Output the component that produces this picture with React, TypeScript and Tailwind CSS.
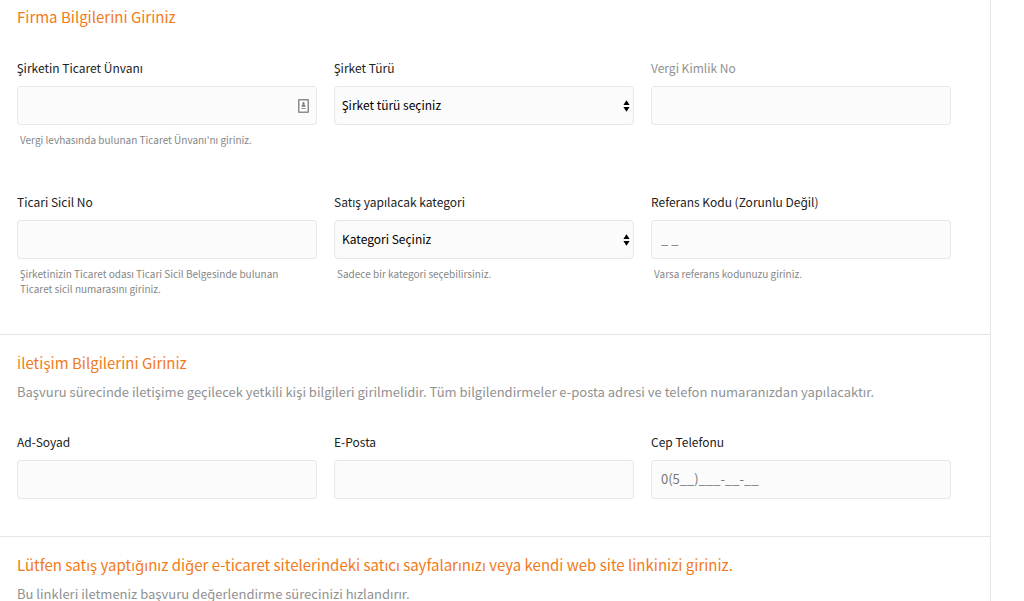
import type { ReactNode } from "react";

const inputClass =
  "block h-[39px] w-full rounded-[3px] border border-[#e8e8e8] bg-[#fbfbfb] px-[9px] pb-0.5 text-[13px] text-[#777] placeholder:text-[#777] outline-none";

function Section({ title, description, className, children }: {
  title: ReactNode;
  description?: string;
  className: string;
  children?: ReactNode;
}) {
  return (
    <section className={`pr-[39px] pb-[37px] pl-[17px] ${className}`}>
      <h2 className="pb-0.5 text-[15px] leading-[22px] text-[#f27a1a]">{title}</h2>
      {description && <p className="mt-1 text-[13px] leading-6 text-[#919191]">{description}</p>}
      {children}
    </section>
  );
}

function Field({ id, label, help, muted, children }: {
  id: string;
  label: string;
  help?: string;
  muted?: boolean;
  children: ReactNode;
}) {
  return (
    <div>
      <label
        htmlFor={id}
        className={`mb-2 block text-xs leading-5 ${muted ? "text-[#919191]" : "text-[#222]"}`}
      >
        {label}
      </label>
      {children}
      {help && <p className="mt-[7px] pr-8 pb-px pl-[3px] text-[10px] leading-[15px] text-[#868686]">{help}</p>}
    </div>
  );
}

function Select({ id, placeholder }: { id: string; placeholder: string }) {
  return (
    <div className="relative">
      <select
        id={id}
        className="block h-[39px] w-full appearance-none rounded-[4px] border border-[#e6e6e6] bg-[#fbfbfb] px-[7px] pb-0.5 text-xs text-black outline-none"
      >
        <option>{placeholder}</option>
      </select>
      <svg
        className="pointer-events-none absolute inset-y-0 right-1 my-auto"
        width="7"
        height="12"
        viewBox="0 0 7 12"
        aria-hidden="true"
      >
        <path d="M3.5 0.3 6.6 5H0.4zM3.5 11.7 0.4 7h6.2z" fill="#000" />
      </svg>
    </div>
  );
}

export default function App() {
  return (
    <div className="min-h-screen bg-white font-['Noto_Sans_CJK_SC','Noto_Sans',sans-serif]">
      <form className="mr-[33px] min-h-screen border-r border-[#e6e6e6]">
        <Section title="Firma Bilgilerini Giriniz" className="pt-1.5">
          <div className="mt-7 grid grid-cols-3 gap-x-[17px] gap-y-11">
            <Field
              id="unvan"
              label="Şirketin Ticaret Ünvanı"
              help="Vergi levhasında bulunan Ticaret Ünvanı'nı giriniz."
            >
              <div className="relative">
                <input id="unvan" type="text" className={inputClass} />
                {/* Contact autofill icon */}
                <svg
                  className="pointer-events-none absolute inset-y-0 right-2 my-auto"
                  width="11"
                  height="14"
                  viewBox="0 0 11 14"
                  aria-hidden="true"
                >
                  <rect x="0.75" y="0.75" width="9.5" height="12.5" rx="0.5" fill="#fff" stroke="#8c8c8c" strokeWidth="1.5" />
                  <circle cx="5.5" cy="4.2" r="1.1" fill="#777" />
                  <path d="M3.5 7.7c0-1.8 1-2.4 2-2.4s2 .6 2 2.4z" fill="#777" />
                  <path d="M3.2 9.5h4.6" stroke="#999" />
                </svg>
              </div>
            </Field>
            <Field id="tur" label="Şirket Türü">
              <Select id="tur" placeholder="Şirket türü seçiniz" />
            </Field>
            <Field id="vergi" label="Vergi Kimlik No" muted>
              <input id="vergi" type="text" disabled className={inputClass} />
            </Field>
            <Field
              id="sicil"
              label="Ticari Sicil No"
              help="Şirketinizin Ticaret odası Ticari Sicil Belgesinde bulunan Ticaret sicil numarasını giriniz."
            >
              <input id="sicil" type="text" className={inputClass} />
            </Field>
            <Field id="kategori" label="Satış yapılacak kategori" help="Sadece bir kategori seçebilirsiniz.">
              <Select id="kategori" placeholder="Kategori Seçiniz" />
            </Field>
            <Field id="referans" label="Referans Kodu (Zorunlu Değil)" help="Varsa referans kodunuzu giriniz.">
              <input id="referans" type="text" placeholder="_ _" className={inputClass} />
            </Field>
          </div>
        </Section>

        <Section
          title={
            <>
              <span className="font-['Open_Sans',sans-serif] leading-none">İ</span>letişim Bilgilerini Giriniz
            </>
          }
          description="Başvuru sürecinde iletişime geçilecek yetkili kişi bilgileri girilmelidir. Tüm bilgilendirmeler e-posta adresi ve telefon numaranızdan yapılacaktır."
          className="border-t border-[#e6e6e6] pt-[17px]"
        >
          <div className="mt-7 grid grid-cols-3 gap-x-[17px]">
            <Field id="ad" label="Ad-Soyad">
              <input id="ad" type="text" className={inputClass} />
            </Field>
            <Field id="eposta" label="E-Posta">
              <input id="eposta" type="email" className={inputClass} />
            </Field>
            <Field id="telefon" label="Cep Telefonu">
              <input id="telefon" type="tel" placeholder="0(5__)___-__-__" className={inputClass} />
            </Field>
          </div>
        </Section>

        <Section
          title="Lütfen satış yaptığınız diğer e-ticaret sitelerindeki satıcı sayfalarınızı veya kendi web site linkinizi giriniz."
          description="Bu linkleri iletmeniz başvuru değerlendirme sürecinizi hızlandırır."
          className="border-t border-[#e6e6e6] pt-[17px]"
        />
      </form>
    </div>
  );
}
